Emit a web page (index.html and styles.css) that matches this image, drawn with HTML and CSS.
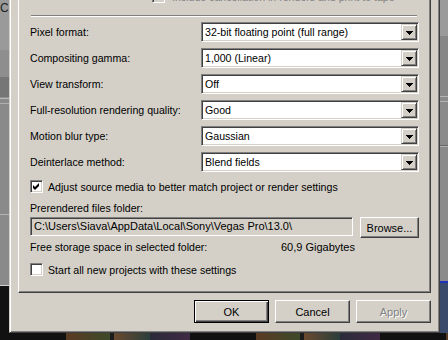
FILE: index.html
```html
<!DOCTYPE html>
<html lang="en">
<head>
  <meta charset="UTF-8">
  <title>Project Properties</title>
  <link rel="stylesheet" href="styles.css">
</head>
<body>
  <div class="screen">
    <div class="main">
      <div class="side side-left">
        <div class="band l1"><span class="side-letter">C</span></div>
        <div class="band l2"></div>
        <div class="band l3"></div>
        <div class="band l4"></div>
        <div class="band l5"></div>
        <div class="band l6"></div>
        <div class="band l7"></div>
      </div>

      <div class="dialog">
        <div class="page">
          <div class="opt opt-top">
            <span class="check check-disabled"></span>
            <span class="opt-text muted">Include cancellation in renders and print to tape</span>
          </div>
          <div class="sep"></div>

          <div class="fields">
            <div class="field">
              <span class="lbl">Pixel format:</span>
              <div class="combo"><span class="combo-val">32-bit floating point (full range)</span><span class="drop"><svg width="7" height="4" viewBox="0 0 7 4"><path d="M0 0h7v1h-1v1h-1v1h-1v1h-1v-1h-1v-1h-1v-1h-1z" fill="#000"/></svg></span></div>
            </div>
            <div class="field">
              <span class="lbl">Compositing gamma:</span>
              <div class="combo"><span class="combo-val">1,000 (Linear)</span><span class="drop"><svg width="7" height="4" viewBox="0 0 7 4"><path d="M0 0h7v1h-1v1h-1v1h-1v1h-1v-1h-1v-1h-1v-1h-1z" fill="#000"/></svg></span></div>
            </div>
            <div class="field">
              <span class="lbl">View transform:</span>
              <div class="combo"><span class="combo-val">Off</span><span class="drop"><svg width="7" height="4" viewBox="0 0 7 4"><path d="M0 0h7v1h-1v1h-1v1h-1v1h-1v-1h-1v-1h-1v-1h-1z" fill="#000"/></svg></span></div>
            </div>
            <div class="field">
              <span class="lbl">Full-resolution rendering quality:</span>
              <div class="combo"><span class="combo-val">Good</span><span class="drop"><svg width="7" height="4" viewBox="0 0 7 4"><path d="M0 0h7v1h-1v1h-1v1h-1v1h-1v-1h-1v-1h-1v-1h-1z" fill="#000"/></svg></span></div>
            </div>
            <div class="field">
              <span class="lbl">Motion blur type:</span>
              <div class="combo"><span class="combo-val">Gaussian</span><span class="drop"><svg width="7" height="4" viewBox="0 0 7 4"><path d="M0 0h7v1h-1v1h-1v1h-1v1h-1v-1h-1v-1h-1v-1h-1z" fill="#000"/></svg></span></div>
            </div>
            <div class="field">
              <span class="lbl">Deinterlace method:</span>
              <div class="combo"><span class="combo-val">Blend fields</span><span class="drop"><svg width="7" height="4" viewBox="0 0 7 4"><path d="M0 0h7v1h-1v1h-1v1h-1v1h-1v-1h-1v-1h-1v-1h-1z" fill="#000"/></svg></span></div>
            </div>
          </div>

          <div class="opt opt-adjust">
            <span class="check"><svg width="11" height="11" viewBox="0 0 11 11"><path d="M2 4l2 2 4-4v3l-4 4-2-2z" fill="#000"/></svg></span>
            <span class="opt-text">Adjust source media to better match project or render settings</span>
          </div>

          <div class="caption">Prerendered files folder:</div>
          <div class="path-row">
            <div class="path">C:\Users\Siava\AppData\Local\Sony\Vegas Pro\13.0\</div>
            <button class="btn btn-browse">Browse...</button>
          </div>

          <div class="free">
            <span class="free-lbl">Free storage space in selected folder:</span>
            <span class="free-val">60,9 Gigabytes</span>
          </div>

          <div class="opt opt-start">
            <span class="check"></span>
            <span class="opt-text">Start all new projects with these settings</span>
          </div>
        </div>

        <div class="actions">
          <button class="btn btn-default">OK</button>
          <button class="btn">Cancel</button>
          <button class="btn" disabled>Apply</button>
        </div>
      </div>

      <div class="side side-right">
        <div class="band r1"></div>
        <div class="band r2"></div>
        <div class="band r3"></div>
        <div class="band r4"></div>
        <div class="band r5"></div>
        <div class="band r6"></div>
      </div>
    </div>
    <div class="strip"></div>
  </div>
</body>
</html>
```

FILE: styles.css
```css
body {
  margin: 0;
  background: #1a1a1a;
  font-family: "Liberation Sans", Arial, sans-serif;
  font-size: 10.6px;
  color: #000;
}
.screen {
  width: 448px;
  height: 340px;
  overflow: hidden;
  display: flex;
  flex-direction: column;
}
.main {
  display: flex;
  height: 333px;
}

/* desktop behind the dialog */
.side {
  display: flex;
  flex-direction: column;
}
.side-left {
  width: 9px;
}
.side-right {
  flex: 1;
}
.band {
  background: #8a8a8a;
}
.l1 { height: 50px; background: #9a9a9a; }
.l2 { height: 27px; background: #8e8e8e; }
.l3 { height: 20px; background: #767676; border-bottom: 1px solid #8e8e8e; }
.l4 { height: 4px; border-top: 1px solid #b8b8b8; border-bottom: 1px solid #b0b0b0; }
.l5 { height: 110px; border-bottom: 1px solid #b4b4b4; }
.l6 { height: 70px; border-bottom: 1px solid #d0d0d0; }
.l7 { flex: 1; background: #111; }
.side-letter {
  display: block;
  margin-top: 1px;
  font-size: 12px;
  line-height: 14px;
  color: #222;
}
.r1 { height: 36px; background: #9a9a9a; }
.r2 { height: 60px; background: #878787; }
.r3 { height: 4px; border-top: 1px solid #b4b4b4; border-bottom: 1px solid #b4b4b4; }
.r4 { height: 43px; border-bottom: 1px solid #6a6a6a; }
.r5 { height: 134px; border-top: 1px solid #b0b0b0; }
.r6 { flex: 1; background: #3a4a6a; border-top: 2px solid #2030c0; }
.strip {
  flex: 1;
  background: repeating-linear-gradient(90deg, #111 0, #111 66px, #5a3a22 66px, #3d4a2a 110px, #1c1c1c 110px, #1c1c1c 114px, #6a4a30 114px, #2a3e3a 150px, #2a2a3a 150px, #402a44 190px);
}

/* dialog */
.dialog {
  width: 431px;
  box-sizing: border-box;
  display: flex;
  flex-direction: column;
  overflow: hidden;
  background: #d4d0c8;
  border: 1px solid;
  border-top: none;
  border-color: #d4d0c8 #404040 #404040 #d4d0c8;
  box-shadow: inset 1px 0 #fff, inset -1px -1px #808080;
  padding: 0 8px 9px 8px;
}
.page {
  border: 1px solid;
  border-top: none;
  border-color: #fff #404040 #404040 #fff;
  box-shadow: inset -1px -1px #808080;
  padding: 0 11px 16px 11px;
}

.opt {
  display: flex;
  align-items: center;
  height: 13px;
}
.opt-text {
  margin-left: 5px;
  white-space: nowrap;
}
.muted {
  color: #808080;
}
.opt-top {
  margin-top: -10px;
  margin-left: 122px;
}
.opt-top .opt-text {
  margin-left: 7px;
}
.opt-adjust {
  margin-top: 8px;
}
.opt-start {
  margin-top: 9px;
}
.check {
  width: 13px;
  height: 13px;
  flex: none;
  box-sizing: border-box;
  background: #fff;
  border: 1px solid;
  border-color: #808080 #fff #fff #808080;
  box-shadow: inset 1px 1px #404040, inset -1px -1px #d4d0c8;
}
.check svg {
  display: block;
}
.check-disabled {
  background: #d4d0c8;
}

.sep {
  margin: 12px 2px 0 1px;
  border-top: 1px solid #808080;
  border-bottom: 1px solid #fff;
}

.fields {
  display: flex;
  flex-direction: column;
  gap: 6px;
  margin-top: 5px;
}
.field {
  display: flex;
  align-items: center;
  height: 20px;
}
.lbl {
  width: 171px;
  flex: none;
  white-space: nowrap;
}
.combo {
  flex: 1;
  height: 20px;
  box-sizing: border-box;
  display: flex;
  background: #fff;
  border: 1px solid;
  border-color: #808080 #fff #fff #808080;
  box-shadow: inset 1px 1px #404040, inset -1px -1px #d4d0c8;
  padding: 1px;
}
.combo-val {
  flex: 1;
  padding-left: 2px;
  line-height: 16px;
  white-space: nowrap;
}
.drop {
  width: 16px;
  height: 16px;
  box-sizing: border-box;
  display: flex;
  align-items: center;
  justify-content: center;
  background: #d4d0c8;
  border: 1px solid;
  border-color: #d4d0c8 #404040 #404040 #d4d0c8;
  box-shadow: inset 1px 1px #fff, inset -1px -1px #808080;
}
.drop svg {
  display: block;
  margin-top: 1px;
}

.caption {
  margin-top: 9px;
  line-height: 13px;
}
.path-row {
  display: flex;
  align-items: flex-start;
  gap: 7px;
  margin-top: 2px;
}
.path {
  flex: 1;
  height: 19px;
  box-sizing: border-box;
  border: 1px solid;
  border-color: #808080 #fff #fff #808080;
  box-shadow: inset 1px 1px #404040, inset -1px -1px #d4d0c8;
  padding: 0 3px;
  font-size: 11px;
  line-height: 17px;
  white-space: nowrap;
  overflow: hidden;
}
.free {
  display: flex;
  margin-top: 3px;
  line-height: 13px;
}
.free-lbl {
  width: 251px;
}
.free-val {
  font-size: 11px;
}

/* buttons */
.btn {
  font: inherit;
  font-size: 11px;
  color: #000;
  background: #d4d0c8;
  width: 75px;
  height: 23px;
  padding: 0;
  border: 1px solid;
  border-color: #fff #404040 #404040 #fff;
  box-shadow: inset -1px -1px #808080;
}
.btn-browse {
  width: 59px;
  height: 21px;
}
.btn-default {
  border-color: #000;
  box-shadow: inset 1px 1px #fff, inset -1px -1px #404040, inset -2px -2px #808080;
}
.btn:disabled {
  color: #808080;
  text-shadow: 1px 1px #fff;
}
.actions {
  display: flex;
  justify-content: flex-end;
  gap: 6px;
  margin-top: 7px;
}
```
